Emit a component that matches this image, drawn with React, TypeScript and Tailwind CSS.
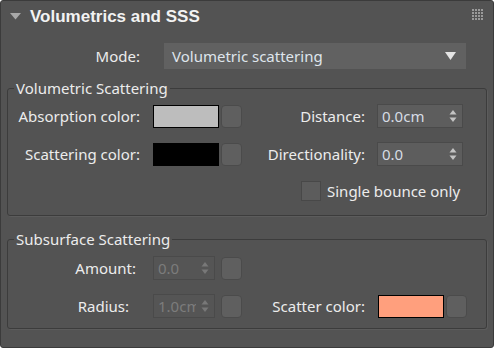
import React from 'react';

const font = { fontFamily: '"Noto Sans", "Liberation Sans", Arial, sans-serif' };

function ColorSwatch({ color }: { color: string }) {
  return (
    <div className="flex items-center gap-[2px]">
      <div className="w-[66px] h-[23px] border border-black" style={{ background: color }} />
      <div className="w-[21px] h-[23px] rounded-[4px] bg-[#5f5f5f] border border-[#4b4b4b]" />
    </div>
  );
}

function Arrows({ disabled }: { disabled?: boolean }) {
  const c = disabled ? '#787878' : '#c4c4c4';
  return (
    <svg width="8" height="14" viewBox="0 0 8 14" className="shrink-0">
      <path d="M4 1 L7.5 5.5 L0.5 5.5 Z" fill={c} />
      <path d="M4 13 L7.5 8.5 L0.5 8.5 Z" fill={c} />
    </svg>
  );
}

function Spinner({ value, w, disabled }: { value: string; w: string; disabled?: boolean }) {
  return (
    <div
      className={`${w} h-[24px] flex items-center justify-between pl-[4px] pr-[5px] border ${
        disabled ? 'bg-[#555555] border-[#4a4a4a] text-[#7c7c7c]' : 'bg-[#5d5d5d] border-[#4a4a4a] text-[#d6dce4]'
      } overflow-hidden`}
    >
      <span className={`whitespace-nowrap overflow-hidden leading-[20px] ${disabled ? 'w-[38px]' : ''}`}>{value}</span>
      <Arrows disabled={disabled} />
    </div>
  );
}

function GroupBox({ title, className, children }: { title: string; className: string; children: React.ReactNode }) {
  return (
    <fieldset className={`mx-[6px] border border-[#3c3c3c] rounded-[3px] shadow-[1px_1px_0_#5c5c5c] ${className}`}>
      <legend className="ml-[6px] px-[2px] h-[18px] leading-[18px] text-[15px] text-[#ececec]">{title}</legend>
      {children}
    </fieldset>
  );
}

export default function App() {
  return (
    <div
      className="w-[494px] h-[348px] bg-[#535353] border border-[#3b3b3b] rounded-[3px] text-[15px] leading-[20px] text-[#ececec] overflow-hidden"
      style={font}
    >
      {/* header */}
      <div className="h-[31px] flex items-center pl-[9px] pr-[10px]">
        <svg width="11" height="7" viewBox="0 0 11 7" className="mr-[9px]">
          <path d="M0 0 L11 0 L5.5 6.5 Z" fill="#a8a8a8" />
        </svg>
        <span
          className="font-bold text-[17px] text-[#f2f2f2]"
          style={{ fontFamily: '"Liberation Sans", Arial, sans-serif' }}
        >
          Volumetrics and SSS
        </span>
        <div className="ml-auto grid grid-cols-4 gap-[1px] mt-[-4px]">
          {Array.from({ length: 16 }).map((_, i) => (
            <div key={i} className="w-[2px] h-[2px] bg-[#9a9a9a]" />
          ))}
        </div>
      </div>

      {/* mode */}
      <div className="flex items-center mt-[11px]">
        <div className="w-[139px] text-right">Mode:</div>
        <div className="ml-[24px] w-[302px] h-[26px] bg-[#616161] flex items-center pl-[8px] pr-[10px] text-[#dfe5ec]">
          <span>Volumetric scattering</span>
          <svg width="11" height="8" viewBox="0 0 11 8" className="ml-auto">
            <path d="M0 0 L11 0 L5.5 8 Z" fill="#e4e4e4" />
          </svg>
        </div>
      </div>

      {/* volumetric scattering */}
      <GroupBox title="Volumetric Scattering" className="mt-[10px] h-[137px]">
        <div className="flex flex-col gap-[14px] mt-[7px]">
          <div className="flex items-center">
            <div className="w-[132px] text-right">Absorption color:</div>
            <div className="ml-[13px]">
              <ColorSwatch color="#bdbdbd" />
            </div>
            <div className="w-[123px] text-right">Distance:</div>
            <div className="ml-[12px]">
              <Spinner value="0.0cm" w="w-[86px]" />
            </div>
          </div>
          <div className="flex items-center">
            <div className="w-[132px] text-right">Scattering color:</div>
            <div className="ml-[13px]">
              <ColorSwatch color="#000000" />
            </div>
            <div className="w-[123px] text-right">Directionality:</div>
            <div className="ml-[12px]">
              <Spinner value="0.0" w="w-[86px]" />
            </div>
          </div>
          <div className="flex items-center ml-[293px] mt-[1px]">
            <div className="w-[20px] h-[20px] bg-[#5c5c5c] border border-[#484848]" />
            <span className="ml-[6px]">Single bounce only</span>
          </div>
        </div>
      </GroupBox>

      {/* subsurface scattering */}
      <GroupBox title="Subsurface Scattering" className="mt-[14px] h-[99px]">
        <div className="flex flex-col gap-[14px] mt-[8px]">
          <div className="flex items-center">
            <div className="w-[128px] text-right">Amount:</div>
            <div className="ml-[17px] flex items-center gap-[6px]">
              <Spinner value="0.0" w="w-[62px]" disabled />
              <div className="w-[21px] h-[23px] rounded-[4px] bg-[#5f5f5f] border border-[#4b4b4b]" />
            </div>
          </div>
          <div className="flex items-center">
            <div className="w-[121px] text-right">Radius:</div>
            <div className="ml-[24px] flex items-center gap-[6px]">
              <Spinner value="1.0cm" w="w-[62px]" disabled />
              <div className="w-[21px] h-[23px] rounded-[4px] bg-[#5f5f5f] border border-[#4b4b4b]" />
            </div>
            <div className="w-[123px] text-right">Scatter color:</div>
            <div className="ml-[13px]">
              <ColorSwatch color="#ff9f7d" />
            </div>
          </div>
        </div>
      </GroupBox>
    </div>
  );
}
